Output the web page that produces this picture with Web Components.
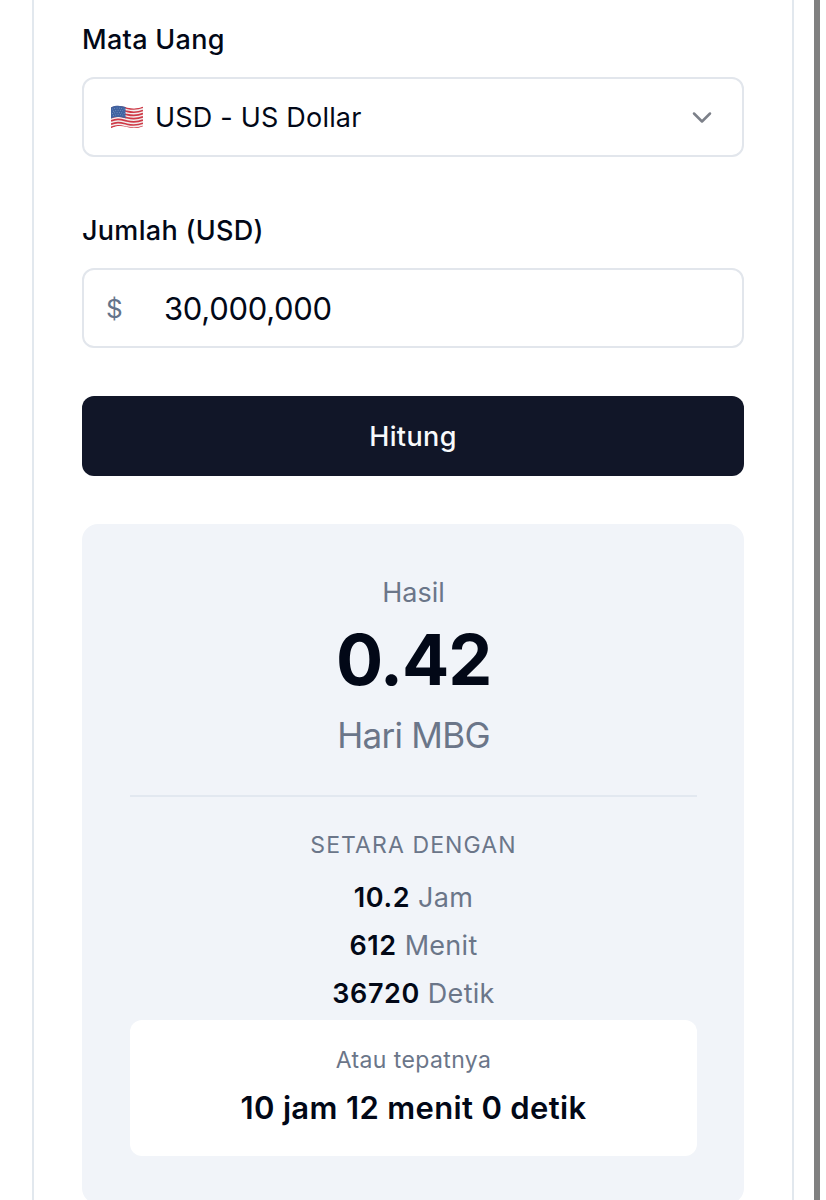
<!DOCTYPE html>
<html lang="id">
<head>
<meta charset="utf-8">
<title>Kalkulator MBG</title>
<style>
  body {
    margin: 0;
    height: 1200px;
    overflow: hidden;
    background: #fff;
    font-family: Inter, "Liberation Sans", sans-serif;
    color: #020817;
  }
</style>
</head>
<body>
<app-kalkulator>
  <campo-form label="Mata Uang">
    <pilih-mata-uang>USD - US Dollar</pilih-mata-uang>
  </campo-form>
  <campo-form label="Jumlah (USD)">
    <input-jumlah simbol="$">30,000,000</input-jumlah>
  </campo-form>
  <tombol-hitung>Hitung</tombol-hitung>
  <kartu-hasil nilai="0.42" satuan="Hari MBG">
    <baris-setara nilai="10.2">Jam</baris-setara>
    <baris-setara nilai="612">Menit</baris-setara>
    <baris-setara nilai="36720">Detik</baris-setara>
    <kotak-tepat slot="tepat">10 jam 12 menit 0 detik</kotak-tepat>
  </kartu-hasil>
</app-kalkulator>

<script>
// Card with the page edge strip on the right
class AppKalkulator extends HTMLElement {
  constructor() {
    super();
    this.attachShadow({ mode: "open" });
    this.shadowRoot.innerHTML = `
      <style>
        :host {
          display: flex;
          width: 826px;
          height: 1200px;
          overflow: hidden;
        }
        .card {
          box-sizing: border-box;
          flex: none;
          width: 762px;
          height: 1260px;
          margin-left: 32px;
          padding: 20px 48px 0;
          border: solid #e2e8ee;
          border-width: 0 2px;
        }
        .edge {
          width: 6px;
          margin-left: 20px;
          background: #808080;
        }
      </style>
      <div class="card"><slot></slot></div>
      <div class="edge"></div>
    `;
  }
}

class CampoForm extends HTMLElement {
  constructor() {
    super();
    this.attachShadow({ mode: "open" });
    this.shadowRoot.innerHTML = `
      <style>
        :host {
          display: block;
          margin-bottom: 48px;
        }
        :host(:first-child) {
          margin-bottom: 54px;
        }
        .label {
          height: 40px;
          margin-bottom: 17px;
          font-size: 27px;
          font-weight: 500;
          line-height: 40px;
          letter-spacing: 0.3px;
        }
      </style>
      <div class="label">${this.getAttribute("label")}</div>
      <slot></slot>
    `;
  }
}

class PilihMataUang extends HTMLElement {
  constructor() {
    super();
    this.attachShadow({ mode: "open" });
    this.shadowRoot.innerHTML = `
      <style>
        :host {
          box-sizing: border-box;
          display: flex;
          align-items: center;
          height: 80px;
          padding: 0 28px 0 26px;
          border: 2px solid #e2e6ec;
          border-radius: 12px;
          font-size: 27px;
          letter-spacing: 0.2px;
        }
        .flag {
          width: 34px;
          height: 26px;
          margin-right: 11px;
        }
        .text {
          flex: 1;
        }
      </style>
      <svg class="flag" viewBox="0 0 34 26">
        <defs>
          <clipPath id="wave">
            <path d="M1 3.4C7 .6 11 2 17 3.4s10 1.500 16-1v19.800c-6 2.600-10 2.200-16 .8S7 21.400 1 24.200z"/>
          </clipPath>
        </defs>
        <g clip-path="url(#wave)">
          <rect width="34" height="26" fill="#f3eeee"/>
          <g fill="none" stroke="#cf3a47" stroke-width="1.650">
            <path d="M1 4.200C7 1.400 11 2.800 17 4.200s10 1.500 16-1"/>
            <path d="M1 7.400C7 4.600 11 6 17 7.400s10 1.500 16-1"/>
            <path d="M1 10.600C7 7.800 11 9.200 17 10.600s10 1.500 16-1"/>
            <path d="M1 13.800C7 11 11 12.400 17 13.800s10 1.500 16-1"/>
            <path d="M1 17C7 14.200 11 15.600 17 17s10 1.500 16-1"/>
            <path d="M1 20.200C7 17.400 11 18.800 17 20.200s10 1.500 16-1"/>
            <path d="M1 23.400C7 20.600 11 22 17 23.400s10 1.500 16-1"/>
          </g>
          <path d="M1 0h14.500v14.200C10 12.700 6 12.200 1 14.500z" fill="#3f62a0"/>
          <g fill="none" stroke="#8ba3cb" stroke-width=".8" stroke-dasharray=".8 1.600">
            <path d="M2 5.300c4-1.700 8-1.500 13 0M3 7.500c4-1.700 8-1.500 12 0M2 9.700c4-1.700 8-1.500 13 0M3 11.800c4-1.700 8-1.500 12 0"/>
          </g>
        </g>
      </svg>
      <span class="text"><slot></slot></span>
      <svg width="24" height="24" viewBox="0 0 24 24" fill="none" stroke="#7c8089" stroke-width="2.500" stroke-linecap="round" stroke-linejoin="round">
        <path d="M4 8.500l8 8 8-8"/>
      </svg>
    `;
  }
}

class InputJumlah extends HTMLElement {
  constructor() {
    super();
    this.attachShadow({ mode: "open" });
    this.shadowRoot.innerHTML = `
      <style>
        :host {
          box-sizing: border-box;
          display: flex;
          align-items: center;
          height: 80px;
          padding: 1px 22px 0;
          border: 2px solid #e2e6ec;
          border-radius: 12px;
          font-size: 31px;
          letter-spacing: -0.3px;
        }
        .simbol {
          width: 58px;
          font-size: 26px;
          color: #64748b;
        }
      </style>
      <span class="simbol">${this.getAttribute("simbol")}</span>
      <span><slot></slot></span>
    `;
  }
}

class TombolHitung extends HTMLElement {
  constructor() {
    super();
    this.attachShadow({ mode: "open" });
    this.shadowRoot.innerHTML = `
      <style>
        :host {
          display: block;
        }
        button {
          display: block;
          width: 100%;
          height: 80px;
          padding: 0;
          border: 0;
          border-radius: 12px;
          background: #111628;
          color: #f8fafc;
          font: 450 27px Inter, "Liberation Sans", sans-serif;
          letter-spacing: 0.4px;
          cursor: pointer;
        }
      </style>
      <button><slot></slot></button>
    `;
  }
}

class KartuHasil extends HTMLElement {
  constructor() {
    super();
    this.attachShadow({ mode: "open" });
    this.shadowRoot.innerHTML = `
      <style>
        :host {
          display: block;
          margin-top: 48px;
          padding: 49px 47px 48px 48px;
          border-radius: 16px;
          background: #f1f4f9;
          text-align: center;
          color: #6b7689;
        }
        .judul {
          font-size: 27px;
          line-height: 40px;
        }
        .nilai {
          margin-top: 11px;
          font-size: 70px;
          font-weight: 700;
          line-height: 72px;
          letter-spacing: -1.2px;
          color: #020817;
        }
        .satuan {
          margin-top: 11px;
          font-size: 35px;
          line-height: 56px;
          letter-spacing: -0.7px;
        }
        .setara {
          margin-top: 32px;
          padding-top: 32px;
          border-top: 2px solid #e2e8f0;
        }
        .subjudul {
          margin-bottom: 13px;
          font-size: 23px;
          line-height: 32px;
          letter-spacing: 1.1px;
        }
      </style>
      <div class="judul">Hasil</div>
      <div class="nilai">${this.getAttribute("nilai")}</div>
      <div class="satuan">${this.getAttribute("satuan")}</div>
      <div class="setara">
        <div class="subjudul">SETARA DENGAN</div>
        <slot></slot>
        <slot name="tepat"></slot>
      </div>
    `;
  }
}

class BarisSetara extends HTMLElement {
  constructor() {
    super();
    this.attachShadow({ mode: "open" });
    this.shadowRoot.innerHTML = `
      <style>
        :host {
          display: block;
          font-size: 27px;
          line-height: 48px;
          letter-spacing: 0.3px;
        }
        b {
          font-weight: 600;
          letter-spacing: 0.6px;
          color: #020817;
        }
      </style>
      <b>${this.getAttribute("nilai")}</b> <slot></slot>
    `;
  }
}

class KotakTepat extends HTMLElement {
  constructor() {
    super();
    this.attachShadow({ mode: "open" });
    this.shadowRoot.innerHTML = `
      <style>
        :host {
          box-sizing: border-box;
          display: block;
          height: 136px;
          margin-top: 2px;
          padding-top: 24px;
          border-radius: 12px;
          background: #fff;
        }
        .kecil {
          font-size: 23px;
          line-height: 32px;
          letter-spacing: 0.4px;
        }
        .besar {
          margin-top: 4px;
          font-size: 31px;
          font-weight: 600;
          line-height: 56px;
          letter-spacing: 0.35px;
          color: #020817;
        }
      </style>
      <div class="kecil">Atau tepatnya</div>
      <div class="besar"><slot></slot></div>
    `;
  }
}

customElements.define("app-kalkulator", AppKalkulator);
customElements.define("campo-form", CampoForm);
customElements.define("pilih-mata-uang", PilihMataUang);
customElements.define("input-jumlah", InputJumlah);
customElements.define("tombol-hitung", TombolHitung);
customElements.define("kartu-hasil", KartuHasil);
customElements.define("baris-setara", BarisSetara);
customElements.define("kotak-tepat", KotakTepat);
</script>
</body>
</html>
